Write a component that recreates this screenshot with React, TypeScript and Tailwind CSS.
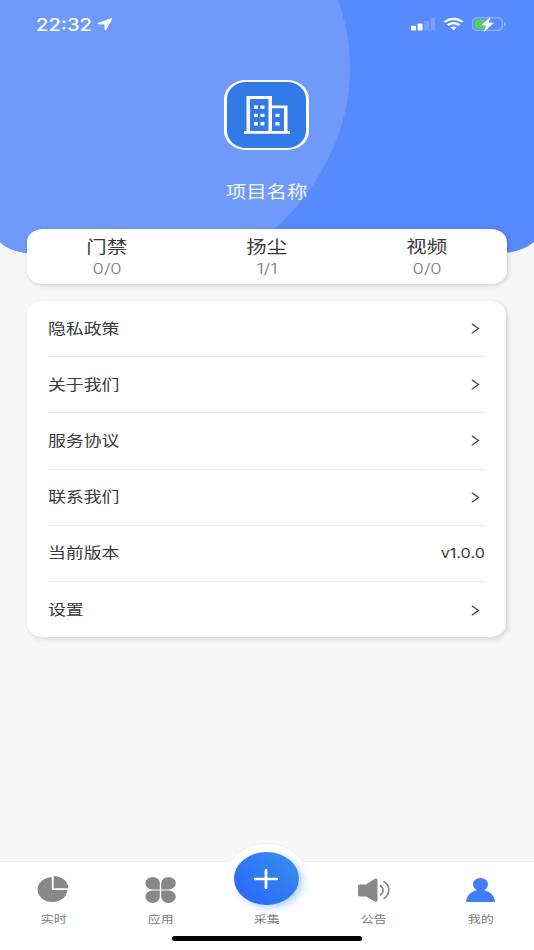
import type { ReactNode } from "react";

const stats = [
  { label: "门禁", value: "0/0" },
  { label: "扬尘", value: "1/1" },
  { label: "视频", value: "0/0" },
];

const rows: { label: string; value?: string }[] = [
  { label: "隐私政策" },
  { label: "关于我们" },
  { label: "服务协议" },
  { label: "联系我们" },
  { label: "当前版本", value: "v1.0.0" },
  { label: "设置" },
];

function HeaderArt() {
  return (
    <svg className="absolute left-0 top-0" width="534" height="256" viewBox="0 0 534 256">
      <defs>
        <clipPath id="header">
          <path d="M0 0H534V242C526 249 515 252 500 254H34C20 252.500 8 250 0 242Z" />
        </clipPath>
      </defs>
      <g clipPath="url(#header)">
        <rect width="534" height="256" fill="#578aff" />
        <ellipse cx="58" cy="68" rx="292" ry="240" fill="#6f9afa" />
      </g>
    </svg>
  );
}

function StatusBar() {
  return (
    <div className="flex h-12 items-center justify-between pl-9 pr-[27px]">
      <div className="flex items-center pt-px">
        <span className="w-[61px] origin-left scale-x-[1.200] whitespace-nowrap font-['Inter',sans-serif] text-[16.800px] font-medium leading-6">
          22:32
        </span>
        <svg width="16" height="13" viewBox="0 0 16 13" fill="#fff">
          <path d="M14 .3 1 5c-.9.400-.7 1.200.2 1.200l6.300.2.200 5.200c0 1 .9 1.100 1.400.3L15 1.200c.3-.6-.3-1.100-1-.9Z" />
        </svg>
      </div>
      <svg width="97" height="16" viewBox="0 0 97 16">
        <rect x="1" y="9.800" width="5" height="4.700" rx="1" fill="#fff" />
        <rect x="7.600" y="7.600" width="5" height="6.900" rx="1" fill="#fff" />
        <rect x="14.200" y="4.800" width="4.800" height="9.700" rx="1" fill="#fff" opacity=".2" />
        <rect x="20.600" y="2" width="4.400" height="12.500" rx="1" fill="#fff" opacity=".2" />
        <g transform="translate(43.600 14.200) scale(1.200 1)" fill="none" stroke="#fff" strokeWidth="2.300">
          <path d="M-7.500-8.200Q0-14.800 7.500-8.200" />
          <path d="M-4.800-5Q0-9.200 4.800-5" />
          <path d="M0 0-2.500-2.700Q0-4.700 2.500-2.700Z" fill="#fff" stroke="none" />
        </g>
        <rect x="62.700" y="1.800" width="29.600" height="12.600" rx="4" fill="none" stroke="#fff" strokeOpacity=".35" strokeWidth="1.200" />
        <path d="M67 3.500h8.500L71.500 9h4l-1.300 4H67q-2.500 0-2.500-2.500V6q0-2.500 2.500-2.500Z" fill="#5ccc60" />
        <path d="M94 6q2 .5 2 2.200t-2 2.200Z" fill="#fff" opacity=".4" />
        <path d="M80 1.500 71.700 9h4.800l-2.400 6.500L83.500 7h-5.200Z" fill="#fff" stroke="#fff" strokeWidth=".6" strokeLinejoin="round" />
      </svg>
    </div>
  );
}

function ProjectBadge() {
  return (
    <div className="flex h-[70px] w-[85px] items-center justify-center rounded-[22px/19px] border-x-3 border-y-2 border-white bg-[#327ae8]">
      <svg width="46" height="38" viewBox="0 0 46 38" fill="#fff">
        <path d="M2.500 0H28v9.500h15.500V35H46v2.800H0V35h2.500ZM6 3v32h18.500V3ZM28 12.200V35h12V12.200Z" fillRule="evenodd" />
        <path d="M10 9.500h4v3.400h-4zM16.400 9.500h4v3.400h-4zM10 17.700h4v3.400h-4zM16.400 17.700h4v3.400h-4zM10 26h4v3.400h-4zM16.400 26h4v3.400h-4zM31.500 17.700h4v3.400h-4zM31.500 26h4v3.400h-4z" />
      </svg>
    </div>
  );
}

function Chevron() {
  return (
    <svg className="mr-[5px]" width="9" height="11" viewBox="0 0 9 11" fill="none" stroke="#444" strokeWidth="1.300">
      <path d="M.8.800 7.500 5.500.8 10.200" />
    </svg>
  );
}

function Tab({ label, children }: { label: string; children?: ReactNode }) {
  return (
    <div className="flex flex-1 flex-col items-center">
      <div className="flex h-[49px] items-end justify-center pb-2">{children}</div>
      <span className="mt-px scale-x-[1.217] text-[10.700px] leading-4 text-[#808080]">{label}</span>
    </div>
  );
}

export default function App() {
  return (
    <div className="relative flex h-[950px] w-[534px] flex-col overflow-hidden bg-[#f7f7f7] font-['Inter','Noto_Sans_CJK_SC',sans-serif] text-[#3a3a3a]">
      <HeaderArt />
      <header className="relative h-[229px] text-white">
        <StatusBar />
        <div className="flex flex-col items-center pr-px pt-[31.500px]">
          <ProjectBadge />
          <h1 className="ml-px mt-[30.500px] scale-x-[1.217] text-[16.800px] font-normal leading-6 text-white/90">项目名称</h1>
        </div>
      </header>

      <section className="relative ml-[27px] flex h-[55px] w-[480px] shrink-0 rounded-[16px/13px] bg-white shadow-[1px_1px_5px_rgba(0,0,0,0.18)]">
        {stats.map((s) => (
          <div key={s.label} className="flex flex-1 flex-col items-center pt-1.5">
            <span className="scale-x-[1.217] text-[16.800px] leading-6">{s.label}</span>
            <span className="scale-x-[1.310] text-[14px] font-light leading-5 text-[#777]">{s.value}</span>
          </div>
        ))}
      </section>

      <section className="relative ml-[27px] mt-[17px] flex h-[336px] w-[479px] shrink-0 flex-col rounded-[16px/13px] bg-white px-[21px] shadow-[2px_2px_5px_rgba(0,0,0,0.14)]">
        {rows.map((r) => (
          <div key={r.label} className="flex h-[56.200px] shrink-0 items-center justify-between border-b border-[#ebebeb] last:border-b-0">
            <span className="origin-left scale-x-[1.217] text-[14.700px] leading-6">{r.label}</span>
            {r.value ? (
              <span className="origin-right scale-x-[1.200] text-[13.500px] leading-5">{r.value}</span>
            ) : (
              <Chevron />
            )}
          </div>
        ))}
      </section>

      <nav className="relative mt-auto flex h-[89px] shrink-0 border-t border-[#eeeeee] bg-white">
        <div className="absolute -top-[19px] left-[226px] h-[67px] w-[81px] rounded-[50%] border-t border-[#eeeeee] bg-white" />
        <Tab label="实时">
          <svg width="32" height="27" viewBox="0 0 32 27" fill="#888">
            <path d="M14.800 1.200V14H30.300A14.900 12.400 0 1 1 14.800 1.200Z" />
            <path d="M16.600 0A14.600 12.200 0 0 1 31.200 12.300H16.600Z" />
          </svg>
        </Tab>
        <Tab label="应用">
          <svg width="31" height="26" viewBox="0 0 31 26" fill="#888">
            <path d="M14.800 12.400H7.200A7.200 6.200 0 1 1 14.800 6.200ZM16.200 12.400V6.200A7.300 6.200 0 1 1 23.800 12.400ZM14.800 13.600H7.200A7.200 6.200 0 1 0 14.800 19.800ZM16.200 13.600V19.800A7.300 6.200 0 1 0 23.800 13.600Z" />
          </svg>
        </Tab>
        <Tab label="采集" />
        <Tab label="公告">
          <svg width="32" height="25" viewBox="0 0 32 25">
            <path d="M2 6.500H8L16 1.200Q19.500-.8 19.500 2.500V22Q19.500 25 16 23L8 18.500H2Q0 18.500 0 16.500V8.500Q0 6.500 2 6.500Z" fill="#888" />
            <path d="M21.800 7.200Q25 9 25 12.200T21.800 17.200M25.500 3.300Q30.800 6.500 30.800 12T25.500 20.800" fill="none" stroke="#888" strokeWidth="1.700" />
          </svg>
        </Tab>
        <Tab label="我的">
          <svg width="29" height="25" viewBox="0 0 29 25" fill="#3f7cfa">
            <ellipse cx="14.500" cy="6.400" rx="7.500" ry="6.400" />
            <path d="M0 23Q1 14.800 11 12h7Q28 14.800 29 23Q29 24 28 24H1Q0 24 0 23Z" />
          </svg>
        </Tab>
        <div className="absolute -top-[10px] left-[234px] flex h-[53px] w-[65px] items-center justify-center rounded-[50%] bg-linear-to-tr from-[#2b62ff] to-[#3a8fe9] shadow-[4px_3px_7px_rgba(50,140,255,0.35)]">
          <svg className="-ml-px" width="24" height="20" viewBox="0 0 24 20" fill="#fff">
            <rect y="8.800" width="24" height="2.400" rx="1" />
            <rect x="10.600" width="2.800" height="20" rx="1" />
          </svg>
        </div>
        <div className="absolute bottom-[9px] left-[172px] h-[5px] w-[190px] rounded-full bg-black" />
      </nav>
    </div>
  );
}
